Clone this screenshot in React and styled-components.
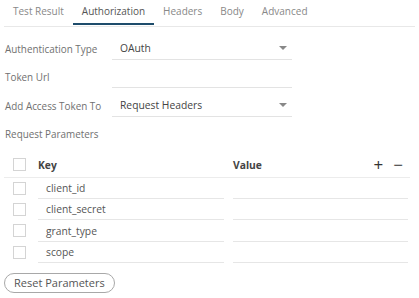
import React from 'react';
import styled, { createGlobalStyle } from 'styled-components';

const GlobalStyle = createGlobalStyle`
  body {
    margin: 0;
    background: #fff;
    font-family: "Open Sans", "Liberation Sans", sans-serif;
    font-size: 10.3px;
    color: #666;
  }
`;

const Page = styled.div`
  width: 419px;
  height: 298px;
  overflow: hidden;
`;

const TabBar = styled.div`
  display: flex;
  margin: 0 4px 0 4px;
  height: 26px;
  border-bottom: 1px solid #e8e8e8;
`;

const Tab = styled.div`
  padding: 0 9px;
  line-height: 23px;
  font-size: 10px;
  color: ${(p) => (p.active ? '#555' : '#888')};
  border-bottom: 2px solid ${(p) => (p.active ? '#1e4c6b' : 'transparent')};
  height: 23px;
  white-space: nowrap;
`;

const Form = styled.div`
  padding: 4px 5px 0 5px;
  display: flex;
  flex-direction: column;
`;

const FieldRow = styled.div`
  display: flex;
  align-items: flex-end;
  height: 28.5px;
`;

const Label = styled.div`
  width: 107px;
  flex-shrink: 0;
  white-space: nowrap;
  line-height: 22px;
  font-size: 9.9px;
  color: #707070;
`;

const Field = styled.div`
  width: 180px;
  height: 22px;
  border-bottom: 1px solid #e3e3e3;
  display: flex;
  align-items: center;
  justify-content: space-between;
  padding: 0 5px 0 8px;
  box-sizing: border-box;
  color: #444;
`;

const Caret = styled.span`
  width: 0;
  height: 0;
  border-left: 4px solid transparent;
  border-right: 4px solid transparent;
  border-top: 4px solid #888;
`;

const Section = styled.div`
  line-height: 22px;
  margin-top: 6px;
  font-size: 9.9px;
  color: #707070;
`;

const Table = styled.div`
  margin: 8px 4px 0 -1px;
`;

const HeadRow = styled.div`
  display: grid;
  grid-template-columns: 34px 195px 1fr auto;
  align-items: center;
  height: 24px;
  border-bottom: 1.5px solid #ececec;
  font-weight: 700;
  color: #444;
`;

const Row = styled.div`
  display: grid;
  grid-template-columns: 34px 186px 1fr;
  align-items: end;
  height: 21.4px;
`;

const Check = styled.div`
  width: 13px;
  height: 13px;
  border: 1px solid #d4d4d4;
  margin-left: 9px;
  align-self: center;
  box-sizing: border-box;
`;

const Cell = styled.div`
  height: 21px;
  line-height: 20px;
  border-bottom: 1.5px solid #e6e6e6;
  padding-left: ${(p) => (p.value ? '0' : '8px')};
  margin-left: ${(p) => (p.value ? '9px' : '0')};
  margin-right: ${(p) => (p.value ? '2px' : '0')};
  box-sizing: border-box;
  color: #555;
`;

const Actions = styled.div`
  display: flex;
  gap: 10px;
  padding-right: 7px;
  font-size: 17px;
  font-weight: 400;
  color: #333;
  line-height: 1;
`;

const ResetButton = styled.button`
  margin-top: 10px;
  margin-left: -1px;
  align-self: flex-start;
  font-family: inherit;
  font-size: 11px;
  color: #555;
  background: #fff;
  border: 1px solid #a8a8a8;
  border-radius: 11px;
  height: 20px;
  padding: 0 9px;
  line-height: 18px;
`;

const params = ['client_id', 'client_secret', 'grant_type', 'scope'];

const App = () => (
  <Page>
    <GlobalStyle />
    <TabBar>
      <Tab>Test Result</Tab>
      <Tab active>Authorization</Tab>
      <Tab>Headers</Tab>
      <Tab>Body</Tab>
      <Tab>Advanced</Tab>
    </TabBar>
    <Form>
      <FieldRow>
        <Label>Authentication Type</Label>
        <Field>
          OAuth
          <Caret />
        </Field>
      </FieldRow>
      <FieldRow>
        <Label>Token Url</Label>
        <Field />
      </FieldRow>
      <FieldRow>
        <Label>Add Access Token To</Label>
        <Field>
          Request Headers
          <Caret />
        </Field>
      </FieldRow>
      <Section>Request Parameters</Section>
      <Table>
        <HeadRow>
          <Check />
          <span>Key</span>
          <span>Value</span>
          <Actions>
            <span>+</span>
            <span>−</span>
          </Actions>
        </HeadRow>
        {params.map((p) => (
          <Row key={p}>
            <Check />
            <Cell>{p}</Cell>
            <Cell value />
          </Row>
        ))}
      </Table>
      <ResetButton>Reset Parameters</ResetButton>
    </Form>
  </Page>
);

export default App;
